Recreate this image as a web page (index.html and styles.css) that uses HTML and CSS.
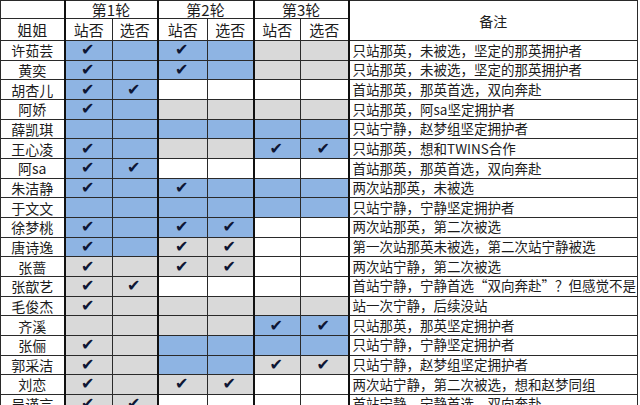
FILE: index.html
```html
<!DOCTYPE html>
<html lang="zh">
<head>
<meta charset="utf-8">
<link rel="stylesheet" href="styles.css">
</head>
<body>
<table class="grid">
  <colgroup>
    <col class="w-name"><col class="w-a"><col class="w-b"><col class="w-c"><col class="w-d"><col class="w-e"><col class="w-f"><col class="w-note">
  </colgroup>
  <thead>
    <tr class="h1">
      <th></th>
      <th colspan="2" class="g">第1轮</th>
      <th colspan="2" class="g">第2轮</th>
      <th colspan="2" class="g">第3轮</th>
      <th rowspan="2" class="g note-h">备注</th>
    </tr>
    <tr class="h2">
      <th>姐姐</th>
      <th class="g">站否</th><th>选否</th>
      <th class="g">站否</th><th>选否</th>
      <th class="g">站否</th><th>选否</th>
    </tr>
  </thead>
  <tbody>
    <tr><td class="n">许茹芸</td><td class="b g">✔</td><td class="b"></td><td class="b g">✔</td><td class="b"></td><td class="s g"></td><td class="s"></td><td class="t g">只站那英，未被选，坚定的那英拥护者</td></tr>
    <tr><td class="n">黄奕</td><td class="b g">✔</td><td class="b"></td><td class="b g">✔</td><td class="b"></td><td class="s g"></td><td class="s"></td><td class="t g">只站那英，未被选，坚定的那英拥护者</td></tr>
    <tr><td class="n">胡杏儿</td><td class="b g">✔</td><td class="b">✔</td><td class="w g"></td><td class="w"></td><td class="w g"></td><td class="w"></td><td class="t g">首站那英，那英首选，双向奔赴</td></tr>
    <tr><td class="n">阿娇</td><td class="b g">✔</td><td class="b"></td><td class="s g"></td><td class="s"></td><td class="s g"></td><td class="s"></td><td class="t g">只站那英，阿sa坚定拥护者</td></tr>
    <tr><td class="n">薛凯琪</td><td class="b g"></td><td class="b"></td><td class="b g"></td><td class="b"></td><td class="b g"></td><td class="b"></td><td class="t g">只站宁静，赵梦组坚定拥护者</td></tr>
    <tr><td class="n">王心凌</td><td class="b g">✔</td><td class="b"></td><td class="s g"></td><td class="s"></td><td class="b g">✔</td><td class="b">✔</td><td class="t g">只站那英，想和TWINS合作</td></tr>
    <tr><td class="n">阿sa</td><td class="b g">✔</td><td class="b">✔</td><td class="w g"></td><td class="w"></td><td class="w g"></td><td class="w"></td><td class="t g">首站那英，那英首选，双向奔赴</td></tr>
    <tr><td class="n">朱洁静</td><td class="b g">✔</td><td class="b"></td><td class="b g">✔</td><td class="b"></td><td class="b g"></td><td class="b"></td><td class="t g">两次站那英，未被选</td></tr>
    <tr><td class="n">于文文</td><td class="b g"></td><td class="b"></td><td class="b g"></td><td class="b"></td><td class="b g"></td><td class="b"></td><td class="t g">只站宁静，宁静坚定拥护者</td></tr>
    <tr><td class="n">徐梦桃</td><td class="b g">✔</td><td class="b"></td><td class="b g">✔</td><td class="b">✔</td><td class="w g"></td><td class="w"></td><td class="t g">两次站那英，第二次被选</td></tr>
    <tr><td class="n">唐诗逸</td><td class="b g">✔</td><td class="b"></td><td class="s g">✔</td><td class="s">✔</td><td class="w g"></td><td class="w"></td><td class="t g">第一次站那英未被选，第二次站宁静被选</td></tr>
    <tr><td class="n">张蔷</td><td class="s g">✔</td><td class="s"></td><td class="s g">✔</td><td class="s">✔</td><td class="w g"></td><td class="w"></td><td class="t g">两次站宁静，第二次被选</td></tr>
    <tr><td class="n">张歆艺</td><td class="s g">✔</td><td class="s">✔</td><td class="w g"></td><td class="w"></td><td class="w g"></td><td class="w"></td><td class="t g">首站宁静，宁静首选“双向奔赴”？但感觉不是</td></tr>
    <tr><td class="n">毛俊杰</td><td class="s g">✔</td><td class="s"></td><td class="s g"></td><td class="s"></td><td class="s g"></td><td class="s"></td><td class="t g">站一次宁静，后续没站</td></tr>
    <tr><td class="n">齐溪</td><td class="s g"></td><td class="s"></td><td class="s g"></td><td class="s"></td><td class="b g">✔</td><td class="b">✔</td><td class="t g">只站那英，那英坚定拥护者</td></tr>
    <tr><td class="n">张俪</td><td class="s g">✔</td><td class="s"></td><td class="b g"></td><td class="b"></td><td class="b g"></td><td class="b"></td><td class="t g">只站宁静，宁静坚定拥护者</td></tr>
    <tr><td class="n">郭采洁</td><td class="s g">✔</td><td class="s"></td><td class="b g"></td><td class="b"></td><td class="s g">✔</td><td class="s">✔</td><td class="t g">只站宁静，赵梦组坚定拥护者</td></tr>
    <tr><td class="n">刘恋</td><td class="s g">✔</td><td class="s"></td><td class="s g">✔</td><td class="s">✔</td><td class="w g"></td><td class="w"></td><td class="t g">两次站宁静，第二次被选，想和赵梦同组</td></tr>
    <tr><td class="n">吴谨言</td><td class="s g">✔</td><td class="s">✔</td><td class="w g"></td><td class="w"></td><td class="w g"></td><td class="w"></td><td class="t g">首站宁静，宁静首选，双向奔赴</td></tr>
  </tbody>
</table>
</body>
</html>
```
FILE: styles.css
```css
html, body {
  margin: 0;
  padding: 0;
  background: #ffffff;
}
body {
  font-family: "Noto Sans CJK SC", "Noto Sans", sans-serif;
  font-size: 13.5px;
  color: #1c1c1c;
  overflow: hidden;
  width: 640px;
  height: 405px;
}
.grid {
  border-collapse: collapse;
  table-layout: fixed;
  width: 637px;
}
.w-name { width: 64px; }
.w-a { width: 48px; }
.w-b { width: 45px; }
.w-c { width: 50px; }
.w-d { width: 46px; }
.w-e { width: 47px; }
.w-f { width: 48px; }
.w-note { width: 289px; }

.grid th, .grid td {
  border: 1px solid #2a2a2a;
  padding: 0;
  line-height: 1;
  font-weight: normal;
  text-align: center;
  white-space: nowrap;
  overflow: hidden;
}
.grid .g { border-left: 2px solid #111; }
.h1 { height: 18px; }
.h2 { height: 22px; }
.grid tbody tr { height: 19.67px; }
.grid tbody tr td { border-top: 1.5px solid #222; }
.grid thead th { font-size: 15px; }
.grid .note-h { vertical-align: middle; font-size: 14px; }
.grid .n { font-size: 14px; }
.grid .b { background: #8eb4e3; }
.grid .s { background: #d9d9d9; }
.grid .w { background: #ffffff; }
.grid .b, .grid .s, .grid .w {
  font-family: "DejaVu Sans", sans-serif;
  font-size: 16px;
  color: #0e1634;
  padding-right: 2px;
}
.grid .t {
  text-align: left;
  padding-left: 3px;
}
```
